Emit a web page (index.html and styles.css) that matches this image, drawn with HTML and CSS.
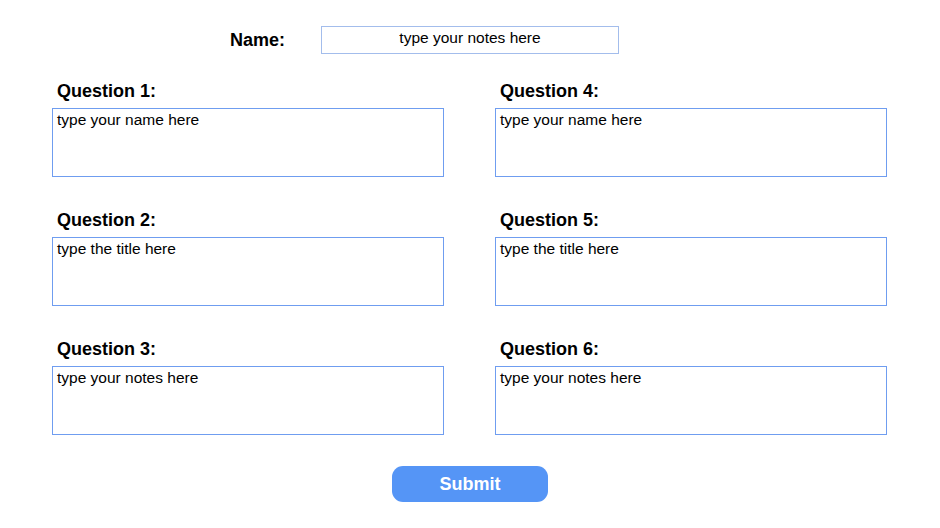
FILE: index.html
```html
<!DOCTYPE html>
<html>
<head>
<meta charset="utf-8">
<link rel="stylesheet" href="styles.css">
</head>
<body>
<div class="page">
  <div class="name-row">
    <div class="name-label">Name:</div>
    <div class="name-input">type your notes here</div>
  </div>
  <div class="grid">
    <div class="cell">
      <div class="q-label">Question 1:</div>
      <div class="q-box">type your name here</div>
    </div>
    <div class="cell">
      <div class="q-label">Question 4:</div>
      <div class="q-box">type your name here</div>
    </div>
    <div class="cell">
      <div class="q-label">Question 2:</div>
      <div class="q-box">type the title here</div>
    </div>
    <div class="cell">
      <div class="q-label">Question 5:</div>
      <div class="q-box">type the title here</div>
    </div>
    <div class="cell">
      <div class="q-label">Question 3:</div>
      <div class="q-box">type your notes here</div>
    </div>
    <div class="cell">
      <div class="q-label">Question 6:</div>
      <div class="q-box">type your notes here</div>
    </div>
  </div>
  <div class="actions">
    <button class="submit">Submit</button>
  </div>
</div>
</body>
</html>
```
FILE: styles.css
```css
html, body {
  margin: 0;
  padding: 0;
  background: #ffffff;
}
body {
  font-family: "Liberation Sans", Arial, sans-serif;
  color: #000000;
}
.page {
  width: 940px;
  height: 528px;
  padding-top: 26px;
  box-sizing: border-box;
}
.name-row {
  display: flex;
  align-items: center;
  padding-left: 230px;
  height: 28px;
}
.name-label {
  width: 91px;
  font-size: 18px;
  font-weight: bold;
  line-height: 21px;
  padding-top: 1px;
}
.name-input {
  width: 298px;
  height: 28px;
  box-sizing: border-box;
  border: 1px solid #a3bdec;
  font-size: 15.5px;
  line-height: 17px;
  padding-top: 2px;
  text-align: center;
}
.grid {
  display: grid;
  grid-template-columns: 392px 392px;
  column-gap: 51px;
  row-gap: 33px;
  margin-top: 27px;
  padding-left: 52px;
}
.q-label {
  font-size: 18px;
  font-weight: bold;
  line-height: 21px;
  height: 27px;
  box-sizing: border-box;
  padding-left: 5px;
}
.q-box {
  height: 69px;
  box-sizing: border-box;
  border: 1px solid #6f9df0;
  padding: 2px 4px;
  font-size: 15.5px;
  line-height: 17px;
}
.actions {
  display: flex;
  justify-content: center;
  margin-top: 31px;
}
.submit {
  width: 156px;
  height: 36px;
  border: none;
  border-radius: 11px;
  background: #5595f6;
  color: #ffffff;
  font-family: "Liberation Sans", Arial, sans-serif;
  font-size: 18px;
  font-weight: bold;
  padding: 0;
  padding-top: 1px;
}
```
